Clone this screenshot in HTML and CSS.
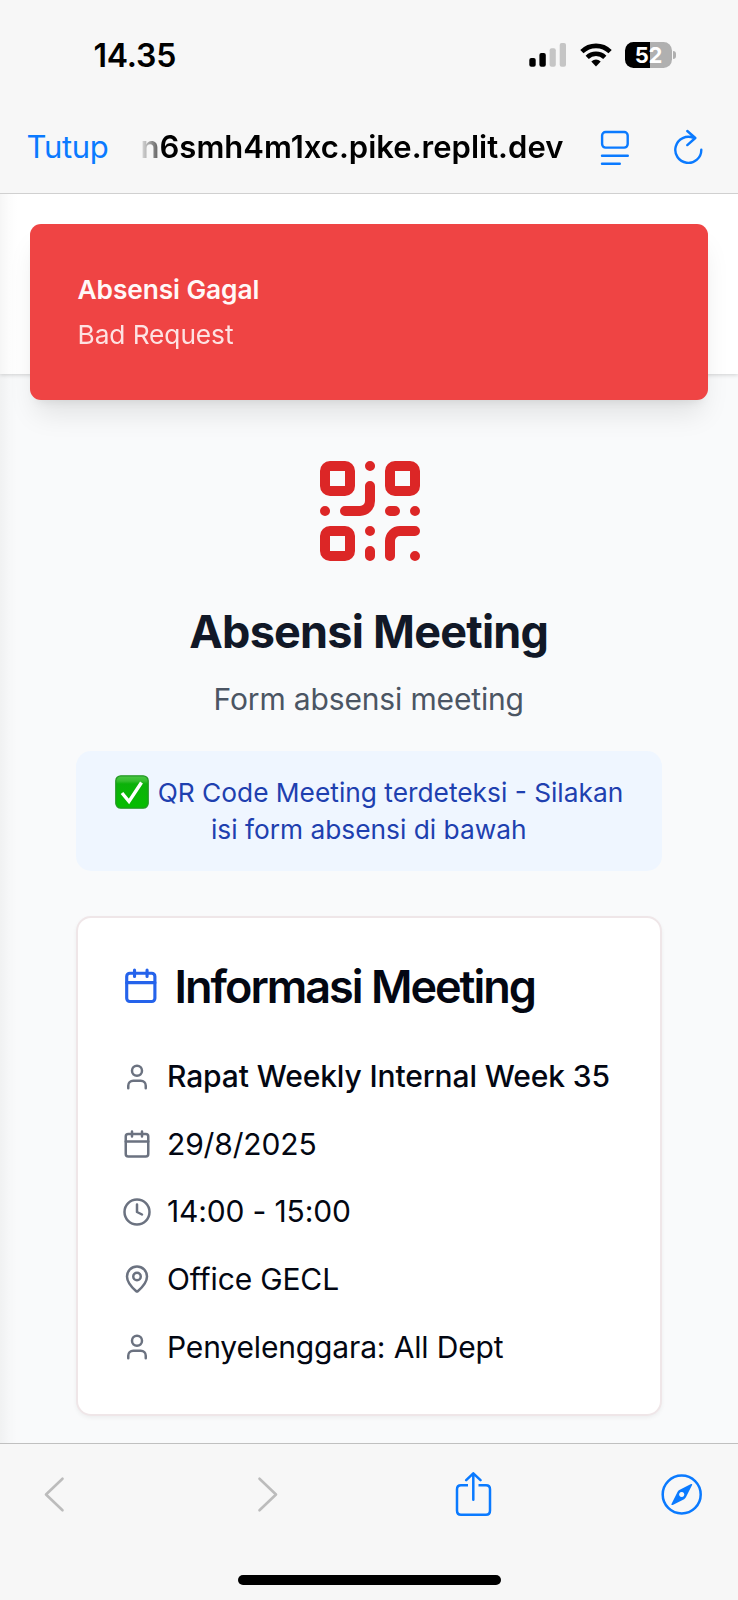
FILE: index.html
```
<!DOCTYPE html>
<html lang="id">
<head>
<meta charset="utf-8">
<title>Absensi Meeting</title>
<link rel="stylesheet" href="styles.css">
</head>
<body>
<div class="screen">
  <header class="chrome">
    <div class="status">
      <span class="time">14.35</span>
      <div class="status-icons">
        <svg class="signal" width="38" height="26" viewBox="0 0 38 26">
          <rect x="0.3" y="16" width="6.4" height="8.7" rx="2"/>
          <rect x="10.4" y="11" width="6.4" height="13.7" rx="2"/>
          <g fill="#c5c5c5"><rect x="20.6" y="6.3" width="6.2" height="18.4" rx="2"/><rect x="30.7" y="1" width="6.3" height="23.7" rx="2"/></g>
        </svg>
        <svg class="wifi" width="32" height="26" viewBox="0 0 32 26">
          <g fill="none" stroke="#000" stroke-width="4.6"><path d="M1.9 9.7A20 20 0 0 1 30.1 9.7"/><path d="M7.2 15.3A12.7 12.7 0 0 1 24.8 15.3"/></g>
          <path d="M16 24.6L11.3 19.6Q16 15.5 20.7 19.6Z"/>
        </svg>
        <div class="battery"><span class="level">52</span><i class="nub"></i></div>
      </div>
    </div>
    <div class="address">
      <span class="close">Tutup</span>
      <span class="url">n6smh4m1xc.pike.replit.dev</span>
      <svg class="reader" width="30" height="36" viewBox="0 0 30 36" fill="none" stroke="#0a7aff" stroke-width="2.4" stroke-linecap="round">
        <rect x="2.1" y="3" width="25.6" height="15.6" rx="3.5"/><path d="M2 26.7H27.8M2 34.8H19.8"/>
      </svg>
      <svg class="reload" width="30" height="36" viewBox="0 0 30 36" fill="none" stroke="#0a7aff" stroke-width="2.4" stroke-linecap="round" stroke-linejoin="round">
        <path d="M28.3 20.7A13 13 0 1 1 20.6 9M14.3 2L22.3 9L14.3 16.1"/>
      </svg>
    </div>
  </header>

  <main class="page">
    <div class="topbar"></div>
    <div class="toast">
      <div class="toast-title">Absensi Gagal</div>
      <div class="toast-text">Bad Request</div>
    </div>
    <section class="content">
      <svg class="qr" viewBox="0 0 24 24">
        <rect width="5" height="5" x="3" y="3" rx="1"/><rect width="5" height="5" x="16" y="3" rx="1"/><rect width="5" height="5" x="3" y="16" rx="1"/>
        <path d="M21 16h-3a2 2 0 0 0-2 2v3M21 21v.01M12 7v3a2 2 0 0 1-2 2H7M3 12h.01M12 3h.01M12 16v.01M16 12h1M21 12v.01M12 21v-1"/>
      </svg>
      <h1 class="title">Absensi Meeting</h1>
      <p class="subtitle">Form absensi meeting</p>
      <p class="notice"><svg class="check" width="34" height="34" viewBox="0 0 34 34">
          <defs><linearGradient id="g" x1="0" y1="0" x2="0" y2="1"><stop offset="0" stop-color="#49c743"/><stop offset=".16" stop-color="#35bd2e"/><stop offset=".25" stop-color="#0cb10a"/><stop offset="1" stop-color="#05bd00"/></linearGradient></defs>
          <rect x=".8" y=".8" width="32.4" height="32.4" rx="5" fill="url(#g)" stroke="#239824" stroke-width="1.3"/>
          <path d="M7 18L14 26.5L26.5 7.5" fill="none" stroke="#fff" stroke-width="3.4"/>
        </svg> QR Code Meeting terdeteksi - Silakan isi form absensi di bawah</p>

      <article class="card">
        <h2 class="card-title">
          <svg class="icon-lg" viewBox="0 0 24 24"><path d="M8 2v4M16 2v4M3 10h18"/><rect width="18" height="18" x="3" y="4" rx="2"/></svg>
          <span>Informasi Meeting</span>
        </h2>
        <ul class="rows">
          <li class="row strong"><svg class="icon" viewBox="0 0 24 24"><path d="M19 21v-2a4 4 0 0 0-4-4H9a4 4 0 0 0-4 4v2"/><circle cx="12" cy="7" r="4"/></svg><span class="name">Rapat Weekly Internal Week 35</span></li>
          <li class="row"><svg class="icon" viewBox="0 0 24 24"><path d="M8 2v4M16 2v4M3 10h18"/><rect width="18" height="18" x="3" y="4" rx="2"/></svg><span>29/8/2025</span></li>
          <li class="row"><svg class="icon" viewBox="0 0 24 24"><circle cx="12" cy="12" r="10"/><path d="M12 6v6l4 2"/></svg><span>14:00 - 15:00</span></li>
          <li class="row"><svg class="icon" viewBox="0 0 24 24"><path d="M20 10c0 4.993-5.539 10.193-7.399 11.799a1 1 0 0 1-1.202 0C9.539 20.193 4 14.993 4 10a8 8 0 0 1 16 0"/><circle cx="12" cy="10" r="3"/></svg><span>Office GECL</span></li>
          <li class="row"><svg class="icon" viewBox="0 0 24 24"><path d="M19 21v-2a4 4 0 0 0-4-4H9a4 4 0 0 0-4 4v2"/><circle cx="12" cy="7" r="4"/></svg><span>Penyelenggara: All Dept</span></li>
        </ul>
      </article>
    </section>
  </main>

  <footer class="toolbar">
    <nav class="tools">
      <svg width="22" height="46" viewBox="0 0 22 46" fill="none" stroke="#bcbcbc" stroke-width="2.6" stroke-linecap="round" stroke-linejoin="round"><path d="M19.5 6.7L3 22.5L19.5 38.3"/></svg>
      <svg width="22" height="46" viewBox="0 0 22 46" fill="none" stroke="#bcbcbc" stroke-width="2.6" stroke-linecap="round" stroke-linejoin="round"><path d="M3.5 6.7L20 22.5L3.5 38.3"/></svg>
      <svg width="38" height="46" viewBox="0 0 38 46" fill="none" stroke="#0a7aff" stroke-width="2.5" stroke-linecap="round" stroke-linejoin="round"><path stroke-linecap="butt" d="M14 13.3H7Q3 13.3 3 17.3V38.5Q3 42.8 7 42.8H32Q36 42.8 36 38.5V17.3Q36 13.3 32 13.3H24.5"/><path d="M19.3 27.8V1.4M12.2 8.2L19.3 1.3L26.5 8.2"/></svg>
      <svg width="42" height="46" viewBox="0 0 42 46"><g transform="translate(-.3 -.5)"><circle cx="21" cy="23" r="19" fill="none" stroke="#0a7aff" stroke-width="2.5"/><path fill="#0a7aff" fill-rule="evenodd" d="M30.3 12.6Q31.9 11.9 31.4 13.6L25.2 25.8Q24.6 27 23.4 27.7L12 33.4Q10 34 10.9 32.3L16.8 20.6Q17.5 19.2 18.6 18.6ZM21 20.4a2.6 2.6 0 1 0 .01 0Z"/></g></svg>
    </nav>
    <div class="home"></div>
  </footer>
</div>
</body>
</html>
```
FILE: styles.css
```
* { box-sizing: border-box; }
body { margin: 0; font-family: Inter, "Liberation Sans", sans-serif; }
h1, h2, p, ul { margin: 0; padding: 0; }
svg { display: block; flex: none; }
.screen { width: 738px; height: 1600px; display: flex; flex-direction: column; overflow: hidden; }

.chrome { height: 194px; flex: none; background: #f7f7f7; border-bottom: 1px solid #d0d0d0; }
.status { height: 110px; padding: 0 62px 0 93.5px; display: flex; justify-content: space-between; align-items: center; }
.time { padding-top: 2px; font-size: 32px; font-weight: 600; line-height: 40px; letter-spacing: -0.2px; }
.status-icons { display: flex; align-items: center; }
.wifi { margin-left: 13px; }
.battery { position: relative; width: 47px; height: 26px; margin-left: 13px; margin-right: 4px; border-radius: 8.5px; background: linear-gradient(90deg, #000 53%, #b0b0b0 53%); color: #fff; display: flex; justify-content: center; align-items: center; }
.level { font-size: 22px; line-height: 26px; font-weight: 700; letter-spacing: -0.3px; }
.nub { position: absolute; right: -4px; top: 9px; width: 3px; height: 8px; border-radius: 0 4px 4px 0; background: #b0b0b0; }
.address { height: 74px; padding-left: 26.5px; display: flex; align-items: center; }
.close { width: 114px; font-size: 31px; line-height: 40px; letter-spacing: -0.3px; color: #0a7aff; }
.url { width: 425.5px; font-size: 31px; line-height: 40px; font-weight: 600; white-space: nowrap; letter-spacing: 0.02px; color: #000; -webkit-mask-image: linear-gradient(90deg, rgba(0,0,0,.1), rgba(0,0,0,.65) 19px, #000 21px); mask-image: linear-gradient(90deg, rgba(0,0,0,.1), rgba(0,0,0,.65) 19px, #000 21px); }
.reader { margin-left: 34px; overflow: visible; }
.reload { margin-left: 43px; }

.page { position: relative; flex: 1; background: #f9fafb; overflow: hidden; }
.page::before { content: ""; position: absolute; z-index: 1; left: 0; top: 0; bottom: 0; width: 18px; background: linear-gradient(90deg, rgba(0,0,0,.035), rgba(0,0,0,.012) 50%, rgba(0,0,0,0)); }
.topbar { height: 179.5px; background: #fff; box-shadow: 0 1px 4px rgba(0,0,0,.17); }
.toast { position: absolute; z-index: 2; left: 30px; top: 29.5px; width: 677.5px; height: 176.5px; padding: 47.5px; border-radius: 11px; background: #ef4444; box-shadow: 0 19px 28px -6px rgba(0,0,0,.1), 0 7px 11px -7px rgba(0,0,0,.1); color: #fff8f8; }
.toast-title { font-size: 26.3px; line-height: 37.6px; font-weight: 600; letter-spacing: -0.08px; }
.toast-text { margin-top: 7.5px; font-size: 26.3px; line-height: 37.6px; letter-spacing: -0.08px; opacity: .88; }

.content { padding: 77.5px 76px 0 75.5px; display: flex; flex-direction: column; align-items: center; }
.qr { width: 120px; height: 120px; margin-left: 2px; fill: none; stroke: #dc2626; stroke-width: 2; stroke-linecap: round; stroke-linejoin: round; }
.title { margin-top: 31px; font-size: 45px; line-height: 60px; font-weight: 700; letter-spacing: -0.78px; color: #111827; }
.subtitle { margin-top: 15px; font-size: 30px; line-height: 45px; letter-spacing: -0.15px; color: #4b5563; }
.notice { width: 100%; height: 120px; margin-top: 29px; padding: 22.5px; border-radius: 15px; background: #eff6ff; color: #1e40af; font-size: 26.3px; line-height: 37.9px; text-align: center; }
.check { display: inline-block; vertical-align: -1.5px; margin: -10px 1px -10px 1px; position: relative; top: -4px; }
.card { width: 100%; height: 499.5px; margin-top: 45px; padding: 45px 44.5px; border: 2px solid #efe6e8; border-radius: 15px; background: #fff; box-shadow: 0 2px 4px rgba(0,0,0,.05); color: #030712; }
.card-title { display: flex; align-items: center; gap: 15.5px; height: 46px; font-size: 45px; line-height: 45px; font-weight: 600; letter-spacing: -2px; white-space: nowrap; }
.icon-lg, .icon { fill: none; stroke-width: 2; stroke-linecap: round; stroke-linejoin: round; }
.icon-lg { width: 37.6px; height: 37.6px; margin-left: -0.5px; stroke: #2563eb; }
.icon { width: 30px; height: 30px; margin-left: -0.5px; stroke: #6b7280; }
.rows { margin-top: 45px; display: flex; flex-direction: column; gap: 22.6px; list-style: none; }
.row { display: flex; align-items: center; gap: 15.5px; height: 45px; font-size: 30px; line-height: 45px; letter-spacing: -0.15px; white-space: nowrap; }
.row span { padding-top: 0.5px; }
.strong { font-weight: 500; letter-spacing: -0.12px; }

.toolbar { height: 157px; flex: none; background: #f7f7f7; border-top: 1px solid #c0c0c0; }
.tools { height: 102px; padding: 0 36px 1px 43px; display: grid; grid-template-columns: 213px 198px 207px 42px; align-items: center; }
.home { width: 263px; height: 10px; margin: 29px auto 0; border-radius: 5px; background: #000; }
```
